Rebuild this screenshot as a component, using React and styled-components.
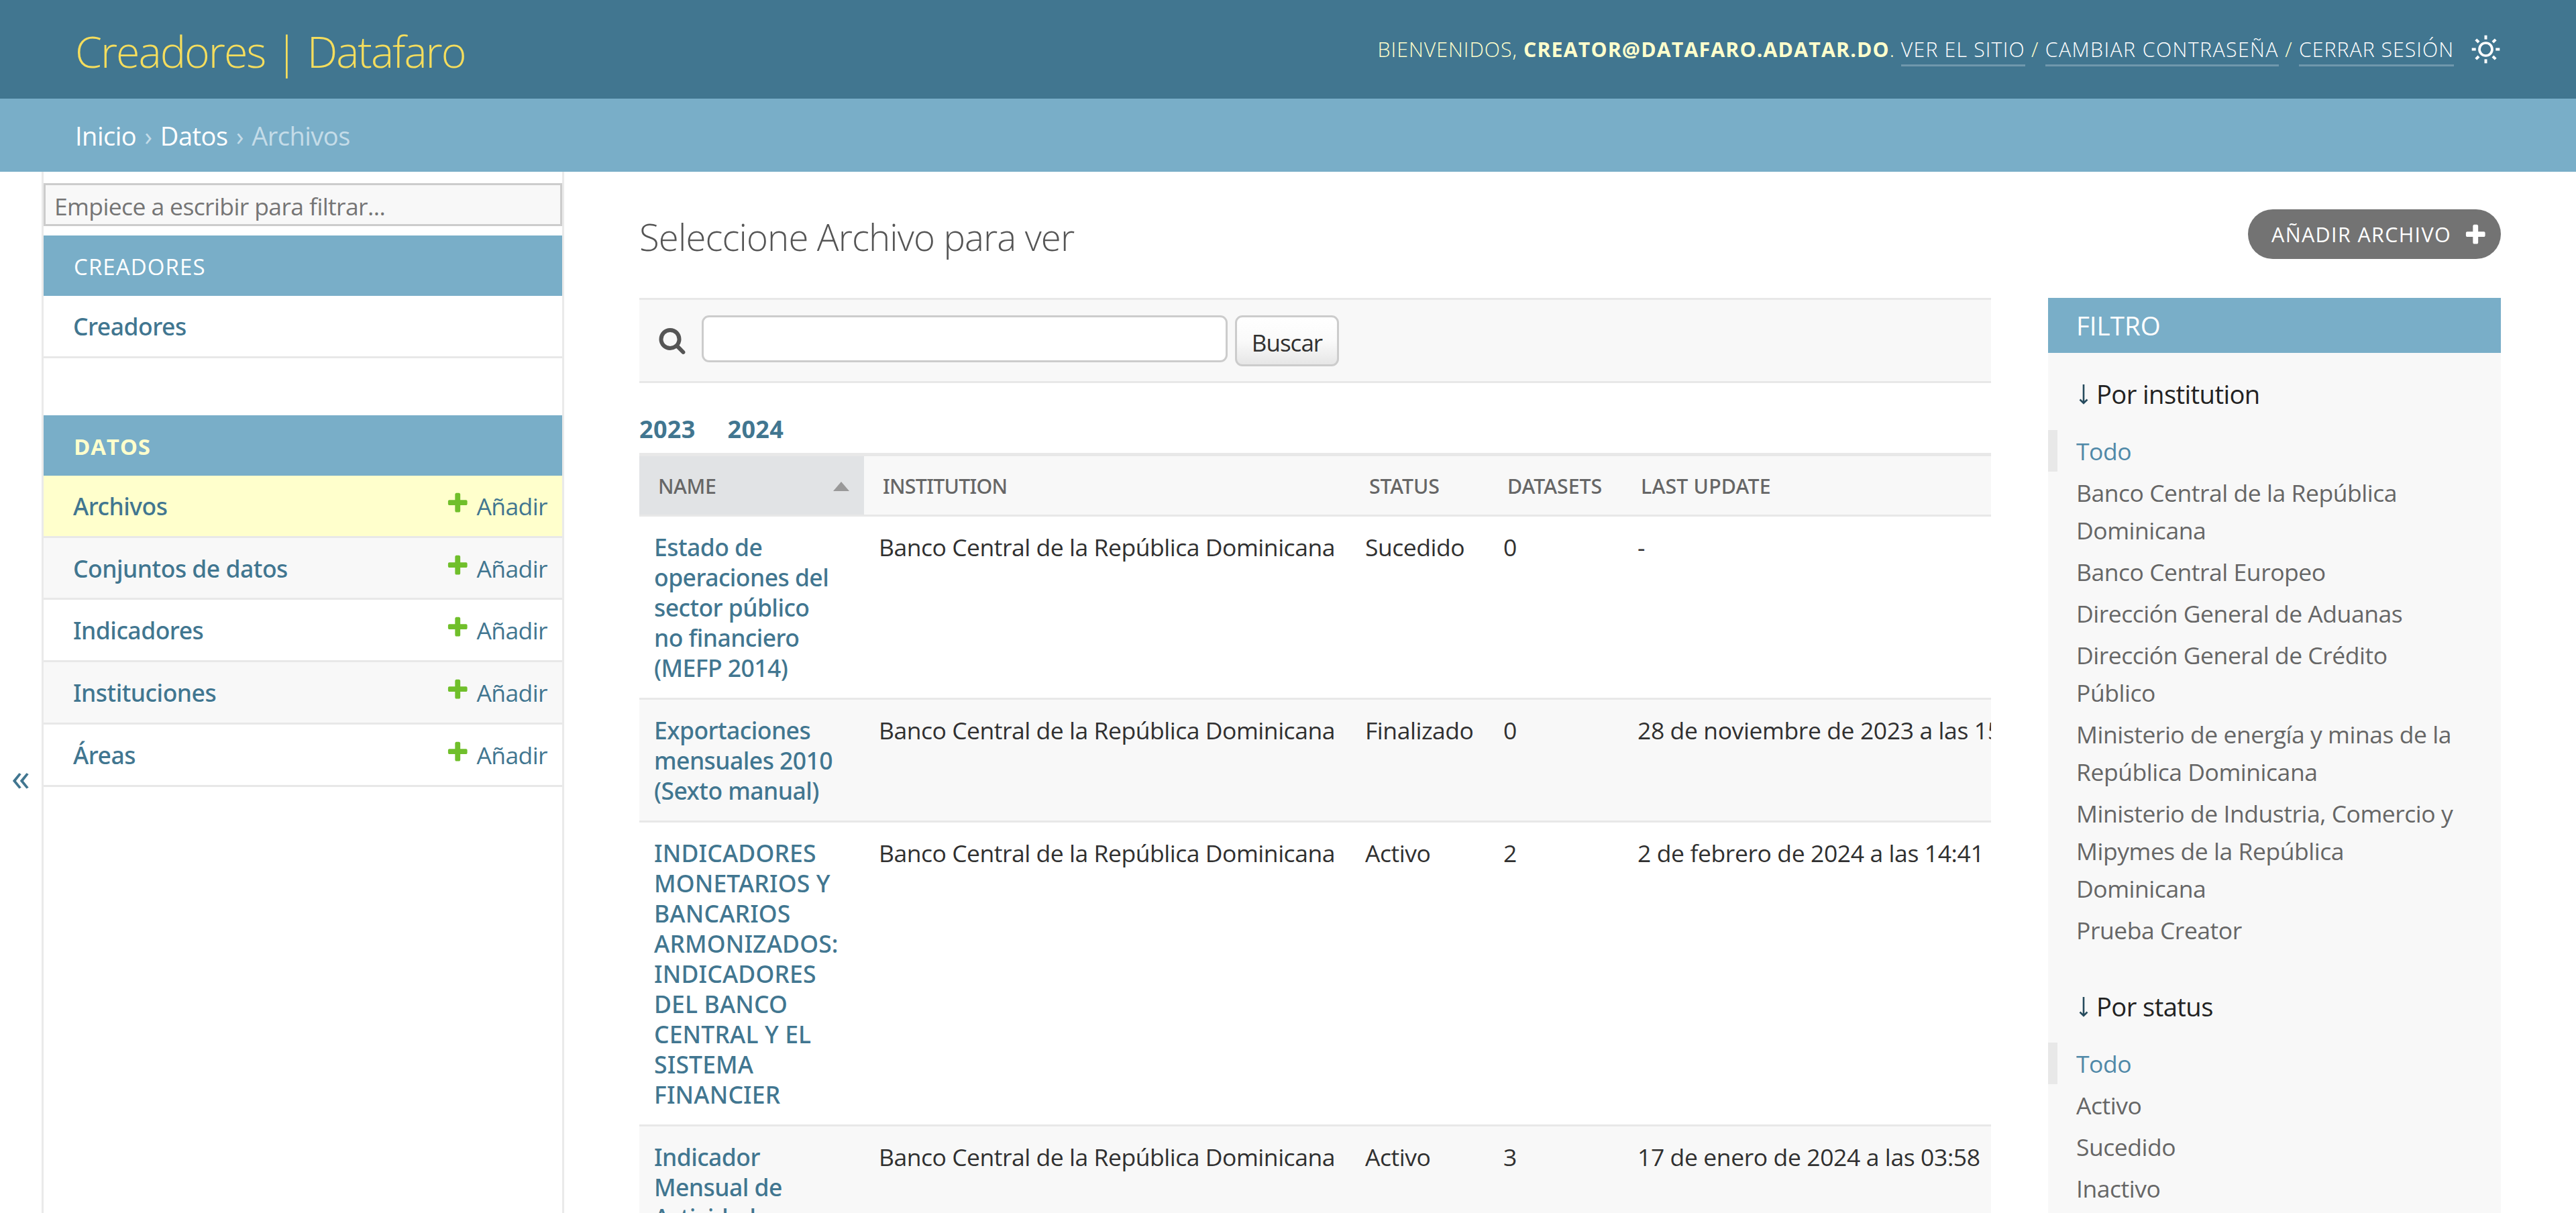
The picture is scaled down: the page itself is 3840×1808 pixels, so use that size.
import React from "react";
import styled, { createGlobalStyle } from "styled-components";

const GlobalStyle = createGlobalStyle`
  *, *::before, *::after { box-sizing: border-box; }
  html, body { margin: 0; padding: 0; background: #fff; }
  body {
    overflow: hidden;
    font-family: "Open Sans", "Noto Sans", sans-serif;
    font-size: 35.5px;
    letter-spacing: -0.47px;
    color: #303030;
  }
  h1, h2, h3 { margin: 0; font-weight: 400; }
  ul { margin: 0; padding: 0; list-style: none; }
  a { text-decoration: none; color: #417690; }
`;

const Page = styled.div`
  display: flex;
  flex-direction: column;
  width: 3840px;
  height: 1808px;
  overflow: hidden;
`;

/* ---------- Header ---------- */

const Header = styled.header`
  flex: none;
  display: flex;
  align-items: center;
  justify-content: space-between;
  height: 147px;
  padding: 0 112px;
  background: #417690;
`;

const Branding = styled.h1`
  padding-top: 5px;
  font-size: 64.5px;
  font-weight: 300;
  line-height: 100px;
  letter-spacing: -2.02px;
  color: #f5dd5d;
`;

const UserTools = styled.div`
  display: flex;
  align-items: center;
  font-size: 30.3px;
  font-weight: 300;
  line-height: 44px;
  letter-spacing: 1px;
  text-transform: uppercase;
  white-space: pre;
  color: #ffffcc;

  strong { font-weight: 700; letter-spacing: 1.15px; }
`;

const ToolLink = styled.a`
  margin-top: 3px;
  border-bottom: 3px solid rgba(255, 255, 255, 0.25);
  letter-spacing: ${(p) => p.$track}px;
  color: #fff;
`;

const Slash = styled.span`
  width: 30px;
  text-align: center;
`;

const ThemeIcon = styled.svg`
  flex: none;
  width: 45px;
  height: 45px;
  margin-left: 25px;
`;

const Breadcrumbs = styled.nav`
  flex: none;
  display: flex;
  height: 109px;
  padding: 27px 0 0 112px;
  background: #79aec8;
  font-size: 38px;
  line-height: 56px;
  letter-spacing: -0.5px;
  word-spacing: 3px;
  white-space: pre;
  color: #c4dce8;

  a { color: #fff; }
`;

/* ---------- Sidebar ---------- */

const Body = styled.div`
  flex: 1;
  display: flex;
  min-height: 0;
`;

const Toggle = styled.button`
  flex: none;
  width: 62px;
  padding: 861px 0 0;
  border: 0;
  background: #fff;
  font: inherit;
  font-size: 56px;
  font-weight: 400;
  line-height: 80px;
  text-align: center;
  display: flex;
  justify-content: center;
  color: #417690;
`;

const Sidebar = styled.nav`
  flex: none;
  width: 779px;
  padding-top: 17px;
  border: solid #eaeaea;
  border-width: 0 3px;
`;

const NavFilter = styled.input`
  display: block;
  width: 100%;
  height: 64px;
  padding: 3px 0 0 13px;
  border: 3px solid #ccc;
  background: #f8f8f8;
  font: inherit;
  letter-spacing: -0.62px;
  outline: none;

  &::placeholder { color: #757575; opacity: 1; }
`;

const Module = styled.section`
  margin-top: ${(p) => p.$gap}px;
`;

const Caption = styled.h2`
  height: 90px;
  padding: 3px 0 0 45px;
  background: #79aec8;
  font-size: 33px;
  font-weight: ${(p) => (p.$current ? 700 : 400)};
  line-height: 87px;
  letter-spacing: ${(p) => (p.$current ? 0.8 : 1.1)}px;
  text-transform: uppercase;
  color: ${(p) => (p.$current ? "#ffffcc" : "#fff")};
`;

const NavRow = styled.div`
  display: flex;
  justify-content: space-between;
  height: 92.8px;
  padding: 0 22px 0 44px;
  border-bottom: 3px solid #e8e8e8;
  background: ${(p) => (p.$current ? "#ffffcc" : p.$alt ? "#f8f8f8" : "#fff")};
  line-height: 90px;
`;

const NavName = styled.a`
  font-family: "Noto Sans", sans-serif;
  font-weight: 500;
  letter-spacing: -0.5px;
`;

const AddLink = styled.a`
  display: flex;
  gap: 10px;
  letter-spacing: -0.6px;
`;

const PlusSvg = styled.svg`
  flex: none;
  width: 36.5px;
  height: 36.5px;
  margin-top: ${(p) => p.$top || 0}px;
  fill: ${(p) => p.$color};
`;

/* ---------- Main ---------- */

const Main = styled.main`
  flex: 1;
  min-width: 0;
  padding: 0 112px;
`;

const TitleRow = styled.div`
  display: flex;
  justify-content: space-between;
  align-items: flex-start;
  height: 188px;
`;

const Title = styled.h1`
  padding-top: 57px;
  font-size: 54.5px;
  font-weight: 300;
  line-height: 80px;
  letter-spacing: -0.86px;
  color: #555;
`;

const AddButton = styled.a`
  display: flex;
  align-items: center;
  justify-content: space-between;
  width: 377px;
  height: 74px;
  margin-top: 56px;
  padding: 0 20px 0 35px;
  border-radius: 37px;
  background: #737373;
  font-size: 30.5px;
  letter-spacing: 1.35px;
  text-transform: uppercase;
  color: #fff;
`;

const Columns = styled.div`
  display: flex;
  align-items: flex-start;
  justify-content: space-between;
`;

const ChangeList = styled.div`
  width: 2015px;
  overflow: hidden;
`;

const SearchBar = styled.form`
  display: flex;
  align-items: flex-start;
  height: 127px;
  padding: 23px 0 0 28px;
  border: solid #e8e8e8;
  border-width: 3px 0;
  background: #f8f8f8;
`;

const SearchSvg = styled.svg`
  flex: none;
  width: 42px;
  height: 42px;
  margin: 16px 23px 0 0;
  fill: #555;
`;

const SearchInput = styled.input`
  width: 784px;
  height: 70px;
  padding: 0 14px;
  border: 3px solid #ccc;
  border-radius: 11px;
  background: #fff;
  font: inherit;
  outline: none;
`;

const SearchButton = styled.button`
  width: 155px;
  height: 76px;
  margin-left: 11px;
  padding: 5px 0 0;
  border: 3px solid #ccc;
  border-radius: 11px;
  background: linear-gradient(#fff, #fafafa 50%, #e6e6e6);
  font: inherit;
  font-size: 35px;
  line-height: 60px;
  letter-spacing: -1px;
  color: #303030;
`;

const Years = styled.ul`
  display: flex;
  gap: 48px;
  padding: 42px 0 9px;
  font-weight: 700;
  font-size: 36px;
  line-height: 53px;
  letter-spacing: 0.3px;
`;

const TableRow = styled.div`
  display: grid;
  grid-template-columns: 335px 725px 206px 199px 760px;
  width: 2225px;
  height: ${(p) => p.$height}px;
  border-bottom: 3px solid #e8e8e8;
  background: ${(p) => (p.$alt ? "#f8f8f8" : "#fff")};
  line-height: 45px;
`;

const HeadRow = styled(TableRow)`
  border-top: 5px solid #e8e8e8;
`;

const HeadCell = styled.div`
  display: flex;
  align-items: center;
  justify-content: space-between;
  padding: 2px 22px 0 28px;
  background: ${(p) => (p.$sorted ? "#e1e3e5" : "#f8f8f8")};
  font-family: "Noto Sans", sans-serif;
  font-size: 30.3px;
  font-weight: 500;
  letter-spacing: ${(p) => p.$track}px;
  text-transform: uppercase;
  white-space: nowrap;
  color: #666;
`;

const SortArrow = styled.span`
  width: 0;
  height: 0;
  border: solid transparent;
  border-width: 0 12px 14px;
  border-bottom-color: #999;
`;

const Cell = styled.div`
  padding: 23px 0 0 22px;
  white-space: nowrap;
`;

const DateCell = styled(Cell)`
  padding-left: 23px;
  letter-spacing: -0.4px;
`;

const NameCell = styled(Cell)`
  padding-right: 31px;
  white-space: normal;

  a {
    font-family: "Noto Sans", sans-serif;
    font-weight: 500;
    letter-spacing: ${(p) => (p.$caps ? 0.15 : -0.55)}px;
  }
`;

/* ---------- Filter ---------- */

const FilterPanel = styled.aside`
  width: 675px;
  height: 1400px;
  background: #f8f8f8;
`;

const FilterTitle = styled.h2`
  height: 82px;
  padding: 1px 0 0 42px;
  background: #79aec8;
  font-size: 38.5px;
  line-height: 80px;
  letter-spacing: 0;
  text-transform: uppercase;
  color: #fff;
`;

const FilterGroup = styled.section`
  padding-bottom: 22px;
`;

const FilterHeading = styled.h3`
  display: flex;
  gap: 12px;
  height: 115px;
  padding: 33px 0 0 46px;
  font-size: 38.2px;
  line-height: 56px;
  letter-spacing: -0.6px;
  color: #222;
`;

const DownArrow = styled.svg`
  width: 14px;
  height: 30px;
  margin-top: 14px;
  fill: none;
  stroke: #264b5d;
  stroke-width: 2.6;
`;

const FilterItem = styled.li`
  padding: 3px 55px 3px ${(p) => (p.$selected ? 28 : 42)}px;
  border-left: ${(p) => (p.$selected ? 14 : 0)}px solid #e8e8e8;
  line-height: 56px;

  a { color: ${(p) => (p.$selected ? "#5089a8" : "#666")}; }
`;

const PLUS =
  "M1600 796v192q0 40-28 68t-68 28h-416v416q0 40-28 68t-68 28h-192q-40 0-68-28t-28-68v-416h-416q-40 0-68-28t-28-68v-192q0-40 28-68t68-28h416v-416q0-40 28-68t68-28h192q40 0 68 28t28 68v416h416q40 0 68 28t28 68z";

const SEARCH =
  "M1216 832q0-185-131.5-316.5t-316.5-131.5-316.5 131.5-131.5 316.5 131.5 316.5 316.5 131.5 316.5-131.5 131.5-316.5zm512 832q0 52-38 90t-90 38q-54 0-90-38l-343-342q-179 124-399 124-143 0-273.5-55.5t-225-150-150-225-55.5-273.5 55.5-273.5 150-225 225-150 273.5-55.5 273.5 55.5 225 150 150 225 55.5 273.5q0 220-124 399l343 343q37 37 37 90z";

const Plus = ({ color, top }) => (
  <PlusSvg viewBox="0 0 1792 1792" $color={color} $top={top}>
    <path d={PLUS} />
  </PlusSvg>
);

const Sun = () => (
  <ThemeIcon viewBox="-22.5 -22.5 45 45">
    <circle r="9.5" fill="none" stroke="#fff" strokeWidth="3.7" />
    {[0, 45, 90, 135, 180, 225, 270, 315].map((angle) => (
      <rect key={angle} x="-2" y="-20.8" width="4" height="6" fill="#fff" transform={`rotate(${angle})`} />
    ))}
  </ThemeIcon>
);

const models = ["Archivos", "Conjuntos de datos", "Indicadores", "Instituciones", "Áreas"];

const columns = [
  { label: "Name", track: -0.4, sorted: true },
  { label: "Institution", track: -0.7 },
  { label: "Status", track: -0.1 },
  { label: "Datasets", track: 0 },
  { label: "Last update", track: 0.2 },
];

const bank = "Banco Central de la República Dominicana";

const files = [
  { name: "Estado de operaciones del sector público no financiero (MEFP 2014)", status: "Sucedido", sets: 0, updated: "-", height: 273 },
  { name: "Exportaciones mensuales 2010 (Sexto manual)", status: "Finalizado", sets: 0, updated: "28 de noviembre de 2023 a las 15:20", height: 183 },
  { name: "INDICADORES MONETARIOS Y BANCARIOS ARMONIZADOS: INDICADORES DEL BANCO CENTRAL Y EL SISTEMA FINANCIER", status: "Activo", sets: 2, updated: "2 de febrero de 2024 a las 14:41", height: 453, caps: true },
  { name: "Indicador Mensual de Actividad", status: "Activo", sets: 3, updated: "17 de enero de 2024 a las 03:58", height: 273 },
];

const filters = [
  {
    title: "Por institution",
    items: [
      "Todo",
      bank,
      "Banco Central Europeo",
      "Dirección General de Aduanas",
      "Dirección General de Crédito Público",
      "Ministerio de energía y minas de la República Dominicana",
      "Ministerio de Industria, Comercio y Mipymes de la República Dominicana",
      "Prueba Creator",
    ],
  },
  { title: "Por status", items: ["Todo", "Activo", "Sucedido", "Inactivo"] },
];

export default function App() {
  return (
    <Page>
      <GlobalStyle />
      <Header>
        <Branding>Creadores | Datafaro</Branding>
        <UserTools>
          <span>Bienvenidos, </span>
          <strong>creator@datafaro.adatar.do</strong>
          <span>. </span>
          <ToolLink $track={1.15}>Ver el sitio</ToolLink>
          <Slash>/</Slash>
          <ToolLink $track={1.4}>Cambiar contraseña</ToolLink>
          <Slash>/</Slash>
          <ToolLink $track={1}>Cerrar sesión</ToolLink>
          <Sun />
        </UserTools>
      </Header>
      <Breadcrumbs>
        <a>Inicio</a> › <a>Datos</a> › Archivos
      </Breadcrumbs>
      <Body>
        <Toggle>«</Toggle>
        <Sidebar>
          <NavFilter placeholder="Empiece a escribir para filtrar..." />
          <Module $gap={14}>
            <Caption>Creadores</Caption>
            <NavRow>
              <NavName>Creadores</NavName>
            </NavRow>
          </Module>
          <Module $gap={85}>
            <Caption $current>Datos</Caption>
            {models.map((model, i) => (
              <NavRow key={model} $current={i === 0} $alt={i % 2 === 1}>
                <NavName>{model}</NavName>
                <AddLink>
                  <Plus color="#70bf2b" top={22} />
                  Añadir
                </AddLink>
              </NavRow>
            ))}
          </Module>
        </Sidebar>
        <Main>
          <TitleRow>
            <Title>Seleccione Archivo para ver</Title>
            <AddButton>
              Añadir archivo
              <Plus color="#fff" />
            </AddButton>
          </TitleRow>
          <Columns>
            <ChangeList>
              <SearchBar>
                <SearchSvg viewBox="0 0 1792 1792">
                  <path d={SEARCH} />
                </SearchSvg>
                <SearchInput />
                <SearchButton type="button">Buscar</SearchButton>
              </SearchBar>
              <Years>
                <li><a>2023</a></li>
                <li><a>2024</a></li>
              </Years>
              <HeadRow $height={95}>
                {columns.map((c) => (
                  <HeadCell key={c.label} $sorted={c.sorted} $track={c.track}>
                    {c.label}
                    {c.sorted && <SortArrow />}
                  </HeadCell>
                ))}
              </HeadRow>
              {files.map((f, i) => (
                <TableRow key={f.name} $alt={i % 2 === 1} $height={f.height}>
                  <NameCell $caps={f.caps}><a>{f.name}</a></NameCell>
                  <Cell>{bank}</Cell>
                  <Cell>{f.status}</Cell>
                  <Cell>{f.sets}</Cell>
                  <DateCell>{f.updated}</DateCell>
                </TableRow>
              ))}
            </ChangeList>
            <FilterPanel>
              <FilterTitle>Filtro</FilterTitle>
              {filters.map((group) => (
                <FilterGroup key={group.title}>
                  <FilterHeading>
                    <DownArrow viewBox="0 0 14 30">
                      <path d="M7 0V28M1.5 22.5L7 28L12.5 22.5" />
                    </DownArrow>
                    {group.title}
                  </FilterHeading>
                  <ul>
                    {group.items.map((item, i) => (
                      <FilterItem key={item} $selected={i === 0}><a>{item}</a></FilterItem>
                    ))}
                  </ul>
                </FilterGroup>
              ))}
            </FilterPanel>
          </Columns>
        </Main>
      </Body>
    </Page>
  );
}
